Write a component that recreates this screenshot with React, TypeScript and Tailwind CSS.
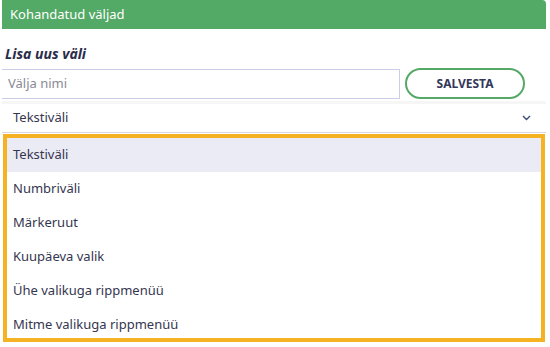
import React from "react";

const items = [
  "Tekstiväli",
  "Numbriväli",
  "Märkeruut",
  "Kuupäeva valik",
  "Ühe valikuga rippmenüü",
  "Mitme valikuga rippmenüü",
];

export default function App() {
  return (
    <div
      className="w-[550px] h-[347px] bg-white overflow-hidden text-[#35364f]"
      style={{ fontFamily: '"Noto Sans", "Open Sans", sans-serif' }}
    >
      <div className="ml-[2px] w-[544px] h-[29px] bg-[#53a966] rounded-tr-[4px] flex items-center pl-[8px] text-white text-[13px]">
        Kohandatud väljad
      </div>
      <div className="pl-[5px] pt-[15px] h-[39px] text-[14px] font-bold italic text-[#2b2d4a] leading-[20px]">
        Lisa uus väli
      </div>
      <div className="flex items-center ml-[2px] h-[31px]">
        <div className="w-[398px] h-[30px] border-y border-r border-[#c9cde8] flex items-center pl-[6px] text-[13px] text-[#8a8a96]">
          Välja nimi
        </div>
        <div className="ml-[5px] w-[120px] h-[31px] rounded-full border-2 border-[#55a866] flex items-center justify-center text-[12px] font-bold text-[#34365a]">
          SALVESTA
        </div>
      </div>
      <div className="mt-[2px] ml-[2px] w-[544px] h-[3px] bg-[#f6f6f6]" />
      <div className="ml-[2px] w-[544px] h-[29px] border-b border-[#d6d6de] flex items-center justify-between pl-[11px] pr-[15px] text-[13px]">
        <span>Tekstiväli</span>
        <svg width="9" height="6" viewBox="0 0 9 6">
          <path d="M1 1 L4.5 4.5 L8 1" fill="none" stroke="#3b4a7a" strokeWidth="1.4" />
        </svg>
      </div>
      <div className="mt-[1px] ml-[3px] w-[542px] h-[208px] border-4 border-[#f5b324] flex flex-col overflow-hidden">
        {items.map((it, i) => (
          <div
            key={it}
            className={`h-[34px] shrink-0 flex items-center pl-[6px] text-[13px] ${
              i === 0 ? "bg-[#ebebf5]" : ""
            }`}
          >
            {it}
          </div>
        ))}
      </div>
    </div>
  );
}
